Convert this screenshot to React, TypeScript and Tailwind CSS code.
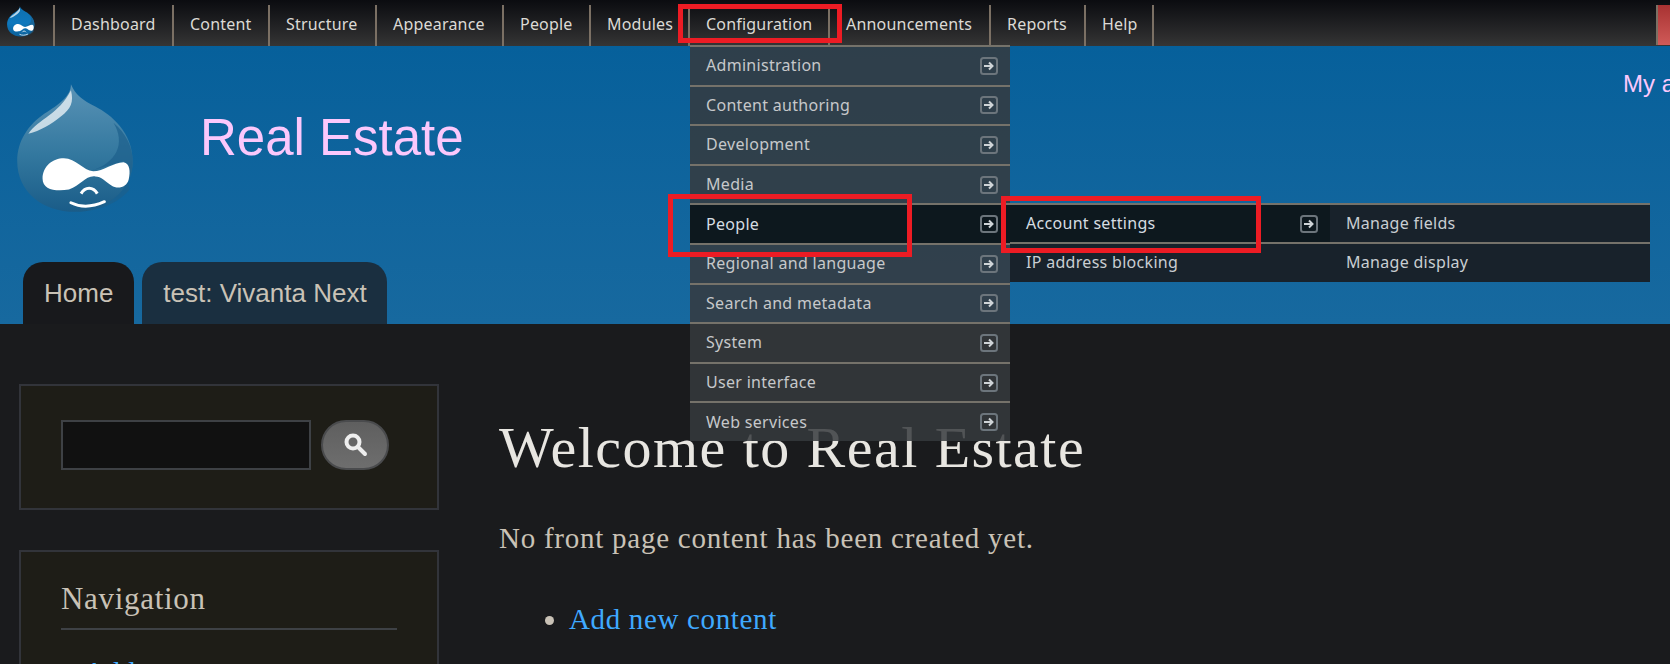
import React from 'react';

const menuFont = "[font-family:'Noto_Sans',sans-serif]";

const topItems = [
  { label: 'Dashboard', width: 'w-[119px]' },
  { label: 'Content', width: 'w-[96px]' },
  { label: 'Structure', width: 'w-[107px]' },
  { label: 'Appearance', width: 'w-[127px]' },
  { label: 'People', width: 'w-[87px]' },
  { label: 'Modules', width: 'w-[99px]' },
  { label: 'Configuration', width: 'w-[140px]' },
  { label: 'Announcements', width: 'w-[161px]' },
  { label: 'Reports', width: 'w-[95px]' },
  { label: 'Help', width: 'w-[68px]' },
];

const configItems = [
  'Administration',
  'Content authoring',
  'Development',
  'Media',
  'People',
  'Regional and language',
  'Search and metadata',
  'System',
  'User interface',
  'Web services',
];

function DrupalDrop({ small = false }: { small?: boolean }) {
  const id = small ? 'dropSmall' : 'dropLarge';
  return (
    <svg viewBox="0 0 150 150" className={small ? 'w-[36px] h-[36px]' : 'w-[152px] h-[152px]'}>
      <defs>
        <linearGradient id={id} x1="0" y1="0" x2="0" y2="1">
          <stop offset="0" stopColor={small ? '#0f6fae' : '#5a93b6'} />
          <stop offset="0.55" stopColor={small ? '#0e78bd' : '#33789f'} />
          <stop offset="1" stopColor={small ? '#0b5f98' : '#1a5c88'} />
        </linearGradient>
      </defs>
      <path
        d="M70 14C70 26 58 34 44 43C28 54 17 70 17 90C17 120 42 140 74 140C106 140 131 118 131 90C131 62 110 44 94 36C82 30 74 24 70 14Z"
        fill={`url(#${id})`}
      />
      <path d="M112 52C124 72 116 92 88 100L122 90L128 118C112 136 90 140 74 140C104 140 131 118 131 90C131 76 124 62 112 52Z" fill="#1c5f8c" opacity="0.7" />
      <path d="M28 63C38 48 58 44 70 20C73 32 70 38 60 46C50 54 40 60 28 63Z" fill="#ffffff" opacity="0.7" />
      <path
        d="M42 107C42 95 52 87 63 87C75 87 82 99 92 100C102 100 112 91 122 91C128 92 129 100 127 108C125 116 116 118 110 114C104 110 100 105 94 105C84 104 80 114 68 118C54 120 42 118 42 107Z"
        fill="#ffffff"
      />
      <path d="M80 122C84 115 92 115 96 122" fill="none" stroke="#ffffff" strokeWidth="3" />
      <path d="M70 131C80 136 92 135 103 130" fill="none" stroke="#ffffff" strokeWidth="3" strokeLinecap="round" />
    </svg>
  );
}

function ArrowBox() {
  return (
    <svg viewBox="0 0 18 18" className="w-[18px] h-[18px] shrink-0">
      <rect x="1" y="1" width="16" height="16" rx="2.5" fill="none" stroke="#6c757c" strokeWidth="2" />
      <path d="M4 9H12M9 5.5L12.5 9L9 12.5" fill="none" stroke="#cfd4d7" strokeWidth="2" />
    </svg>
  );
}

function RedBox({ className }: { className: string }) {
  return <div className={`absolute border-[5px] border-[#ed1c24] pointer-events-none ${className}`} />;
}

export default function App() {
  return (
    <div className="relative w-[1670px] h-[664px] overflow-hidden bg-[#1a1b1d]">
      {/* Admin toolbar */}
      <nav className={`flex h-[46px] pt-[5px] bg-gradient-to-b from-[#0b0c10] to-[#353535] text-[16px] tracking-[0.2px] text-[#dcdad5] ${menuFont}`}>
        <div className="w-[53px] -mt-[2px] pl-[3px]">
          <DrupalDrop small />
        </div>
        {topItems.map(item => (
          <a key={item.label} className={`${item.width} h-[41px] border-l-2 border-[#7b7064] pl-[16px] leading-[38px]`}>
            {item.label}
          </a>
        ))}
        <div className="h-[41px] border-l-2 border-[#7b7064]" />
        <div className="ml-auto w-[14px] h-[40px] border-l-2 border-[#7b7064] bg-gradient-to-b from-[#a83232] to-[#d05a58]" />
      </nav>

      {/* Site header */}
      <header className="flex flex-col justify-between h-[278px] bg-gradient-to-b from-[#06609b] to-[#17699f] [font-family:'Liberation_Sans',sans-serif]">
        <div className="flex">
          <div className="w-[200px] pt-[24px]">
            <DrupalDrop />
          </div>
          <div className="pt-[62px] text-[51px] leading-[60px] text-[#fbc8fc]">Real Estate</div>
          <div className="ml-auto w-[47px] overflow-hidden whitespace-nowrap pt-[22px] text-[24px] leading-[32px] text-[#fbc8fc]">
            My account
          </div>
        </div>
        <div className="flex gap-2 pl-[23px] text-[26px] text-[#c9c2b6]">
          <a className="h-[62px] px-[21px] pt-[12px] rounded-t-[20px] bg-[#18191c]">Home</a>
          <a className="h-[62px] pl-[21px] pr-[20px] pt-[12px] rounded-t-[20px] bg-[#1a2f40]">test: Vivanta Next</a>
        </div>
      </header>

      {/* Page body */}
      <div className="flex pt-[60px] pl-[19px] [font-family:'Liberation_Serif',serif]">
        <aside className="w-[420px] shrink-0">
          <div className="flex gap-[10px] h-[126px] px-[40px] pt-[34px] border-2 border-[#32343a] bg-[#1e1d17]">
            <div className="w-[250px] h-[50px] border-2 border-[#3e4145] bg-[#111111]" />
            <div className="flex items-center justify-center w-[68px] h-[50px] rounded-full border-2 border-[#4a4b4d] bg-gradient-to-b from-[#5f5f5f] to-[#6e6e6e]">
              <svg viewBox="0 0 28 28" className="w-[28px] h-[28px]">
                <circle cx="12" cy="11" r="6.5" fill="none" stroke="#eeeeee" strokeWidth="4" />
                <path d="M17 16L24 23" stroke="#eeeeee" strokeWidth="4" strokeLinecap="round" />
              </svg>
            </div>
          </div>
          <div className="mt-[40px] h-[200px] px-[40px] pt-[27px] border-2 border-[#32343a] bg-[#1e1d17]">
            <h2 className="pb-[9px] border-b-2 border-[#3e4145] text-[31px] leading-[40px] tracking-[0.7px] text-[#c9c2b6]">
              Navigation
            </h2>
            <a className="block pt-[21px] pl-[23px] text-[29px] tracking-[0.65px] text-[#3fa9ff]">Add content</a>
          </div>
        </aside>
        <main className="pl-[60px]">
          <h1 className="pt-[32px] text-[58px] leading-[64px] tracking-[1.45px] text-[#e8e6e1]">Welcome to Real Estate</h1>
          <p className="pt-[40px] text-[29px] leading-[36px] tracking-[0.75px] text-[#c9c2b6]">No front page content has been created yet.</p>
          <ul className="pt-[45px] pl-[70px] list-disc text-[29px] leading-[36px] tracking-[0.65px] marker:text-[#c9c2b6]">
            <li>
              <a className="text-[#3fa9ff]">Add new content</a>
            </li>
          </ul>
        </main>
      </div>

      {/* Open dropdown, floats over the header and the page */}
      <div className={`absolute left-[690px] top-[45px] w-[320px] text-[16px] tracking-[0.3px] ${menuFont}`}>
        {configItems.map(label => (
          <div
            key={label}
            className={`relative flex items-center justify-between h-[39.6px] border-t-2 border-[#75726a] pl-[16px] pr-[12px] ${
              label === 'People' ? 'bg-[#0d181e] text-[#d6dde2]' : 'bg-[#363a3d]/85 text-[#c6c8ca]'
            }`}
          >
            <span className="pb-[1px]">{label}</span>
            <ArrowBox />
            {label === 'People' && (
              <div className="absolute left-[320px] -top-[2px] w-[320px] text-[#c9ced2]">
                <div className="relative flex items-center justify-between h-[39px] border-t-2 border-[#75726a] pl-[16px] pr-[12px] bg-[#0d181e]">
                  <span className="pb-[1px] text-[#d6dde2]">Account settings</span>
                  <ArrowBox />
                  <div className="absolute left-[320px] -top-[2px] w-[320px]">
                    <div className="flex items-center h-[39px] border-t-2 border-[#75726a] pl-[16px] pb-[1px] bg-[#18222b]">Manage fields</div>
                    <div className="flex items-center h-[40px] border-t-2 border-[#75726a] pl-[16px] pb-[3px] bg-[#18222b]">Manage display</div>
                  </div>
                </div>
                <div className="flex items-center h-[40px] border-t-2 border-[#75726a] pl-[16px] pb-[2px] bg-[#18222b]">IP address blocking</div>
              </div>
            )}
          </div>
        ))}
      </div>

      {/* Annotation boxes drawn on the screenshot */}
      <RedBox className="left-[678px] top-[4px] w-[164px] h-[39px]" />
      <RedBox className="left-[668px] top-[194px] w-[244px] h-[63px]" />
      <RedBox className="left-[1001px] top-[196px] w-[260px] h-[57px]" />
    </div>
  );
}
